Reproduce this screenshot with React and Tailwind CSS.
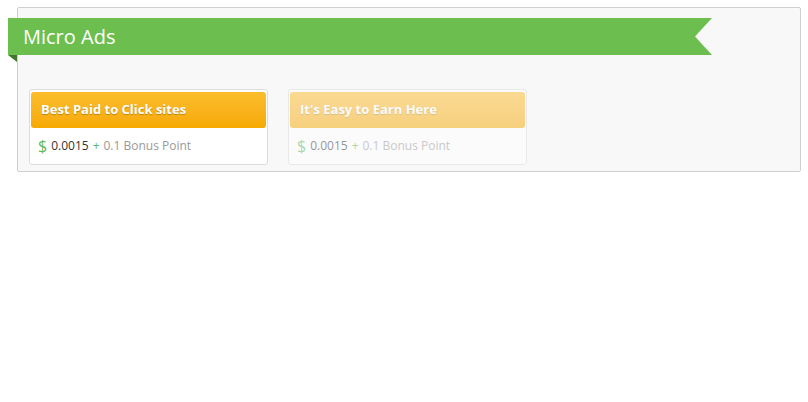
const ads = [
  { title: 'Best Paid to Click sites', faded: false },
  { title: "It's Easy to Earn Here", faded: true },
];

function AdCard({ title, faded }) {
  return (
    <div
      className={
        'w-[239px] rounded-[3px] border border-[#dcdcdc] bg-white px-[1px] pt-[2px] ' +
        (faded ? 'opacity-50' : '')
      }
    >
      <div className="flex h-[36px] items-center rounded-[3px] bg-gradient-to-b from-[#fcbd2c] to-[#f6a900] px-[10px] text-[13px] font-bold text-white [text-shadow:0_1px_1px_rgba(0,0,0,0.25)]">
        {title}
      </div>
      <div className="flex h-[36px] items-center gap-[4px] px-[7px] text-[12px]">
        <span className="text-[16px] leading-none text-[#5cb85c]">$</span>
        <span className="text-[#333]">0.0015</span>
        <span className="text-[#5cb85c]">+</span>
        <span className="text-[#999]">0.1 Bonus Point</span>
      </div>
    </div>
  );
}

export default function App() {
  return (
    <div className="min-h-[402px] bg-white pt-[7px] pl-[17px] font-['Open_Sans',sans-serif]">
      <div className="h-[165px] w-[784px] rounded-[2px] border border-[#cfcfcf] bg-[#f8f8f8] pt-[10px]">
        <div className="-ml-[10px]">
          <div className="flex h-[37px] w-[704px] items-center bg-[#6cbe4e] pl-[15px] text-[20px] text-white [clip-path:polygon(0_0,100%_0,calc(100%-17px)_50%,100%_100%,0_100%)]">
            Micro Ads
          </div>
          <div className="h-0 w-0 border-t-[7px] border-l-[9px] border-t-[#3f7a2c] border-l-transparent" />
        </div>
        <div className="mt-[27px] flex gap-[20px] pl-[11px]">
          {ads.map((ad) => (
            <AdCard key={ad.title} title={ad.title} faded={ad.faded} />
          ))}
        </div>
      </div>
    </div>
  );
}
